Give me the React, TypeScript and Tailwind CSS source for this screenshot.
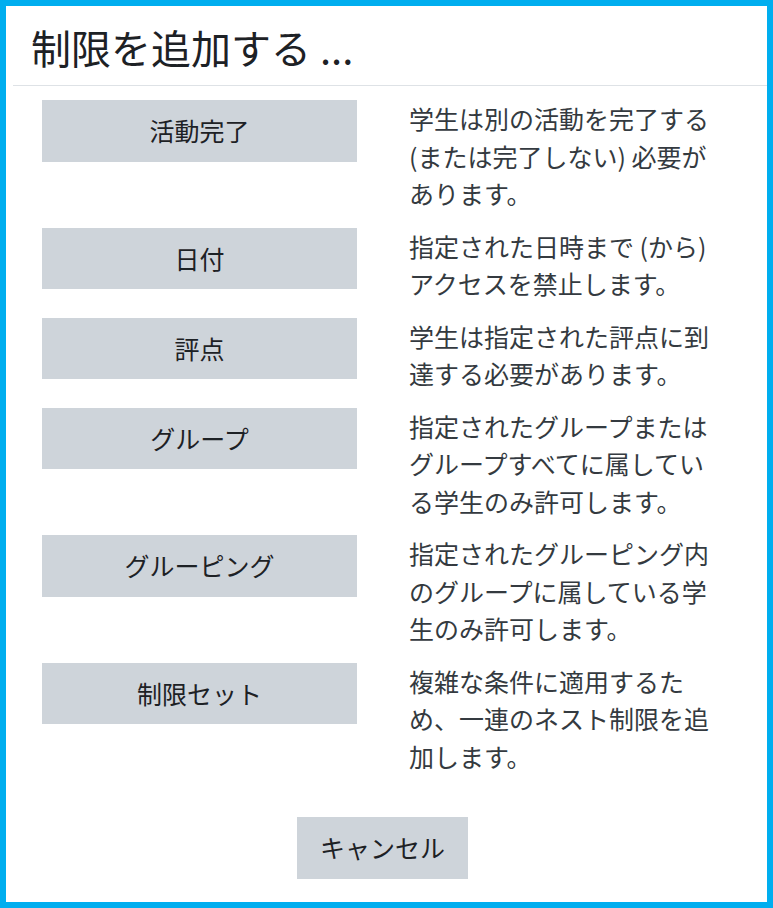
import React from 'react'

type Restriction = {
  label: string
  description: string
}

const RESTRICTIONS: Restriction[] = [
  { label: '活動完了', description: '学生は別の活動を完了する (または完了しない) 必要があります。' },
  { label: '日付', description: '指定された日時まで (から) アクセスを禁止します。' },
  { label: '評点', description: '学生は指定された評点に到達する必要があります。' },
  { label: 'グループ', description: '指定されたグループまたはグループすべてに属している学生のみ許可します。' },
  { label: 'グルーピング', description: '指定されたグルーピング内のグループに属している学生のみ許可します。' },
  { label: '制限セット', description: '複雑な条件に適用するため、一連のネスト制限を追加します。' },
]

export default function App() {
  return (
    <div
      className="w-[773px] h-[908px] border-[6px] border-[#00aeef] bg-white text-[#1d2125]"
      style={{ fontFamily: '"Noto Sans CJK JP", "Noto Sans", sans-serif' }}
    >
      <div className="ml-[7px] h-[80px] border-b border-[#dee2e6] pl-[18px] pt-[17px]">
        <h1 className="text-[40px] leading-[1.2] font-normal">制限を追加する ...</h1>
      </div>

      <div className="pl-[36px] pt-[14px] flex flex-col gap-[15px]">
        {RESTRICTIONS.map((r) => (
          <div key={r.label} className="grid grid-cols-[315px_310px] gap-x-[52px] items-start">
            <button className="bg-[#ced4da] py-3 text-[25px] leading-[1.5] text-[#1d2125] text-center">
              {r.label}
            </button>
            <p className="text-[25px] leading-[1.5] text-[#343a40]">{r.description}</p>
          </div>
        ))}
      </div>

      <div className="flex justify-center pr-[8px] pt-[42px]">
        <button className="w-[171px] bg-[#ced4da] py-3 text-[25px] leading-[1.5] text-[#1d2125]">
          キャンセル
        </button>
      </div>
    </div>
  )
}
